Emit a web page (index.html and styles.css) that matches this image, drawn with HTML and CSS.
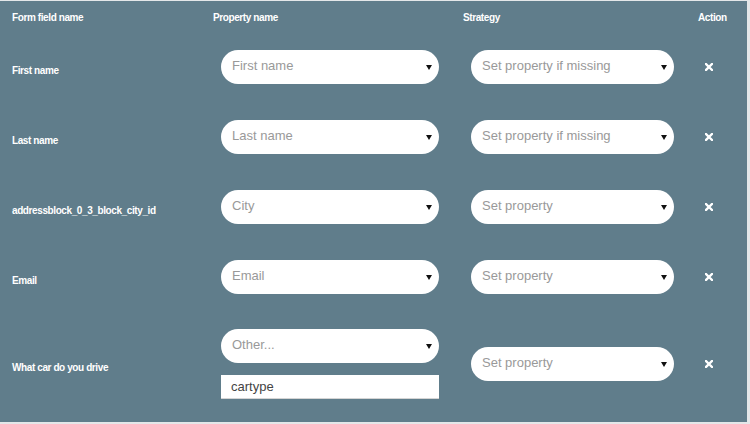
FILE: index.html
```html
<!DOCTYPE html>
<html lang="en">
<head>
  <meta charset="UTF-8">
  <title>Field mapping</title>
  <link rel="stylesheet" href="styles.css">
</head>
<body>
  <div class="mapping">
    <div class="row head">
      <div class="cell">Form field name</div>
      <div class="cell">Property name</div>
      <div class="cell">Strategy</div>
      <div class="cell">Action</div>
    </div>

    <div class="row">
      <div class="cell label">First name</div>
      <div class="cell prop">
        <div class="pick"><select><option>First name</option></select></div>
      </div>
      <div class="cell strat">
        <div class="pick"><select><option>Set property if missing</option></select></div>
      </div>
      <div class="cell action"><a href="#" class="remove"><svg width="8" height="8" viewBox="0 0 8 8"><path d="M1 1L7 7M7 1L1 7" /></svg></a></div>
    </div>

    <div class="row">
      <div class="cell label">Last name</div>
      <div class="cell prop">
        <div class="pick"><select><option>Last name</option></select></div>
      </div>
      <div class="cell strat">
        <div class="pick"><select><option>Set property if missing</option></select></div>
      </div>
      <div class="cell action"><a href="#" class="remove"><svg width="8" height="8" viewBox="0 0 8 8"><path d="M1 1L7 7M7 1L1 7" /></svg></a></div>
    </div>

    <div class="row">
      <div class="cell label">addressblock_0_3_block_city_id</div>
      <div class="cell prop">
        <div class="pick"><select><option>City</option></select></div>
      </div>
      <div class="cell strat">
        <div class="pick"><select><option>Set property</option></select></div>
      </div>
      <div class="cell action"><a href="#" class="remove"><svg width="8" height="8" viewBox="0 0 8 8"><path d="M1 1L7 7M7 1L1 7" /></svg></a></div>
    </div>

    <div class="row">
      <div class="cell label">Email</div>
      <div class="cell prop">
        <div class="pick"><select><option>Email</option></select></div>
      </div>
      <div class="cell strat">
        <div class="pick"><select><option>Set property</option></select></div>
      </div>
      <div class="cell action"><a href="#" class="remove"><svg width="8" height="8" viewBox="0 0 8 8"><path d="M1 1L7 7M7 1L1 7" /></svg></a></div>
    </div>

    <div class="row last">
      <div class="cell label">What car do you drive</div>
      <div class="cell prop">
        <div class="pick"><select><option>Other...</option></select></div>
        <input class="custom" type="text" value="cartype">
      </div>
      <div class="cell strat">
        <div class="pick"><select><option>Set property</option></select></div>
      </div>
      <div class="cell action"><a href="#" class="remove"><svg width="8" height="8" viewBox="0 0 8 8"><path d="M1 1L7 7M7 1L1 7" /></svg></a></div>
    </div>
  </div>
</body>
</html>
```

FILE: styles.css
```css
body {
  margin: 0;
  background-color: #e4e7e9;
  font-family: "Liberation Sans", Arial, sans-serif;
}
.mapping {
  margin-top: 1px;
  width: 747px;
  height: 421px;
  background-color: #607d8b;
  color: #fff;
}
.row {
  display: grid;
  grid-template-columns: 201px 250px 235px 61px;
  align-items: center;
  padding: 18px 0;
}
.row.head {
  padding: 11px 0 8px;
}
.row.last {
  padding-top: 17px;
}
.cell {
  font-size: 10px;
  font-weight: bold;
  letter-spacing: -0.4px;
  line-height: 12px;
  padding-left: 12px;
}
.label {
  padding-top: 8px;
}
.prop {
  padding-left: 20px;
}
.prop .pick {
  width: 218px;
}
.strat {
  padding-left: 20px;
}
.strat .pick {
  width: 203px;
}
.pick {
  position: relative;
}
.pick::after {
  content: "";
  position: absolute;
  right: 7px;
  top: 15px;
  border-left: 3px solid transparent;
  border-right: 3px solid transparent;
  border-top: 5px solid #111;
  pointer-events: none;
}
.pick select {
  display: block;
  box-sizing: border-box;
  width: 100%;
  height: 34px;
  padding: 0 20px 3px 11px;
  border: none;
  border-radius: 17px;
  background-color: #fff;
  color: #999;
  font-family: "Liberation Sans", Arial, sans-serif;
  font-size: 13px;
  letter-spacing: 0;
  appearance: none;
  -webkit-appearance: none;
  outline: none;
}
.custom {
  display: block;
  box-sizing: border-box;
  width: 218px;
  height: 24px;
  margin-top: 12px;
  padding: 0 10px;
  border: none;
  border-bottom: 1px solid #d4d4d4;
  background-color: #fff;
  color: #444;
  font-family: "Liberation Sans", Arial, sans-serif;
  font-size: 13px;
  outline: none;
}
.action {
  padding-left: 19px;
}
.remove {
  display: block;
  width: 8px;
  height: 8px;
}
.remove svg {
  display: block;
}
.remove path {
  stroke: #fff;
  stroke-width: 2.4;
  stroke-linecap: square;
  fill: none;
}
```
